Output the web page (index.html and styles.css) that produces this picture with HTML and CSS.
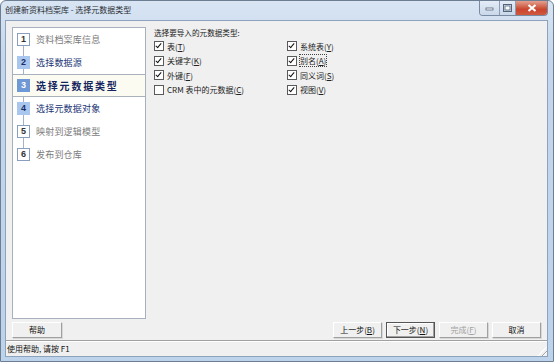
FILE: index.html
```html
<html lang="zh-CN">
<head>
    <meta charset="UTF-8">
    <title>创建新资料档案库 - 选择元数据类型</title>
    <link rel="stylesheet" href="styles.css">
</head>
<body>
    <div class="window">
        <div class="titlebar">
            <div class="title">创建新资料档案库 - 选择元数据类型</div>
            <div class="caption">
                <div class="cap_btn cap_min">
                    <svg width="9" height="5" viewBox="0 0 9 5"><rect x="1" y="2" width="7" height="2" fill="#fff" stroke="#55657a" stroke-width="0.8"/></svg>
                </div>
                <div class="cap_btn cap_max">
                    <svg width="9" height="8" viewBox="0 0 9 8"><rect x="0.5" y="0.5" width="8" height="7" fill="none" stroke="#55657a"/><rect x="2" y="2" width="5" height="4" fill="#fff" stroke="#55657a" stroke-width="0.8"/></svg>
                </div>
                <div class="cap_btn cap_close">
                    <svg width="10" height="8" viewBox="0 0 10 8"><path d="M1.5 1 L8.5 7 M8.5 1 L1.5 7" stroke="#fff" stroke-width="2.2"/></svg>
                </div>
            </div>
        </div>

        <div class="client">
            <div class="main">
                <ol class="steps">
                    <li class="step done"><span class="num">1</span><span class="label">资料档案库信息</span></li>
                    <li class="step reach"><span class="num">2</span><span class="label">选择数据源</span></li>
                    <li class="step current"><span class="num">3</span><span class="label">选择元数据类型</span></li>
                    <li class="step reach"><span class="num">4</span><span class="label">选择元数据对象</span></li>
                    <li class="step done"><span class="num">5</span><span class="label">映射到逻辑模型</span></li>
                    <li class="step done"><span class="num">6</span><span class="label">发布到仓库</span></li>
                </ol>

                <div class="content">
                    <div class="heading">选择要导入的元数据类型:</div>
                    <div class="options">
                        <div class="opt"><span class="cb on"></span><span>表(<u>T</u>)</span></div>
                        <div class="opt"><span class="cb on"></span><span>系统表(<u>Y</u>)</span></div>
                        <div class="opt"><span class="cb on"></span><span>关键字(<u>K</u>)</span></div>
                        <div class="opt"><span class="cb on"></span><span class="focus">别名(<u>A</u>)</span></div>
                        <div class="opt"><span class="cb on"></span><span>外键(<u>F</u>)</span></div>
                        <div class="opt"><span class="cb on"></span><span>同义词(<u>S</u>)</span></div>
                        <div class="opt"><span class="cb"></span><span>CRM 表中的元数据(<u>C</u>)</span></div>
                        <div class="opt"><span class="cb on"></span><span>视图(<u>V</u>)</span></div>
                    </div>
                </div>
            </div>

            <div class="btn_row">
                <div class="btn">帮助</div>
                <div class="btn_group">
                    <div class="btn">上一步(<u>B</u>)</div>
                    <div class="btn default">下一步(<u>N</u>)</div>
                    <div class="btn disabled">完成(<u>F</u>)</div>
                    <div class="btn">取消</div>
                </div>
            </div>

            <div class="status">
                <span>使用帮助, 请按 F1</span>
                <span class="grip"></span>
            </div>
        </div>
    </div>
</body>
</html>
```

FILE: styles.css
```css
body{
    margin: 0;
    font-family: "Noto Sans CJK SC", "Liberation Sans", sans-serif;
    font-size: 8px;
    color: #1a1a1a;
}
.window{
    width: 554px;
    height: 362px;
    box-sizing: border-box;
    border: 1px solid #6d7e93;
    border-radius: 6px 6px 0 0;
    background: linear-gradient(#d9e5f3, #c3d6ed 60px, #bdd2eb);
    display: flex;
    flex-direction: column;
    overflow: hidden;
}
.titlebar{
    height: 19px;
    display: flex;
    align-items: flex-start;
}
.title{
    padding: 3px 0 0 4px;
    line-height: 12px;
    color: #2a2e33;
}
.caption{
    margin-left: auto;
    margin-right: 5px;
    display: flex;
    height: 14px;
    border: 1px solid #7a8aa0;
    border-top: none;
    border-radius: 0 0 4px 4px;
    overflow: hidden;
}
.cap_btn{
    height: 14px;
    display: flex;
    align-items: center;
    justify-content: center;
    background: linear-gradient(#e4ecf6, #c9d8eb);
}
.cap_min{
    width: 19px;
    border-right: 1px solid #8c9db3;
}
.cap_max{
    width: 15px;
    border-right: 1px solid #8c9db3;
}
.cap_close{
    width: 31px;
    background: linear-gradient(#e3a08f, #c9462d 60%, #d0593f);
}

.client{
    flex: 1;
    margin: 0 5px 4px 4px;
    border: 1px solid #8da2bb;
    background: #f0f0f0;
    display: flex;
    flex-direction: column;
}
.main{
    flex: 1;
    display: flex;
    padding: 6px 6px 0 6px;
}
.steps{
    margin: 0;
    padding: 0;
    list-style: none;
    width: 134px;
    height: 292px;
    box-sizing: border-box;
    border: 1px solid #a7b0bc;
    background: #fff;
}
.step{
    height: 23px;
    box-sizing: border-box;
    display: flex;
    align-items: center;
    padding-left: 4px;
    background: linear-gradient(#a3b2c9, #a3b2c9) no-repeat 10px 0 / 1px 100%;
}
.step:first-child{
    background-position: 10px 12px;
}
.step:last-child{
    background-size: 1px 11px;
}
.num{
    width: 13px;
    height: 13px;
    box-sizing: border-box;
    border: 1px solid #8a9ec0;
    background: #fff;
    font-family: "Liberation Sans", sans-serif;
    font-weight: bold;
    font-size: 9px;
    line-height: 11px;
    text-align: center;
    color: #333;
}
.label{
    margin-left: 6px;
    font-size: 9px;
    letter-spacing: 0.2px;
}
.done .label{
    color: #7c7c7c;
}
.reach .num{
    background: #a9c6ee;
    border-color: #a9c6ee;
    color: #1b2c66;
}
.reach .label{
    color: #213474;
}
.current{
    background: #fbfbf1;
    border-top: 1px solid #a9b1bc;
    border-bottom: 1px solid #a9b1bc;
}
.current .num{
    background: #6e98d6;
    border-color: #6e98d6;
    color: #fff;
}
.current .label{
    color: #14245e;
    font-weight: bold;
    font-size: 10px;
    letter-spacing: 1.8px;
}

.content{
    flex: 1;
    padding-left: 8px;
}
.heading{
    line-height: 12px;
    font-size: 7.6px;
    color: #222;
}
.options{
    display: grid;
    grid-template-columns: 133px 1fr;
    grid-auto-rows: 14.5px;
}
.opt{
    display: flex;
    align-items: center;
    color: #222;
}
.opt u{
    text-decoration: underline;
}
.cb{
    width: 8px;
    height: 8px;
    border: 1px solid #5a5a5a;
    background: #fff;
    margin-right: 3px;
    position: relative;
}
.cb.on::after{
    content: "";
    position: absolute;
    left: 2px;
    top: 0px;
    width: 2px;
    height: 5px;
    border: solid #111;
    border-width: 0 1.5px 1.5px 0;
    transform: rotate(40deg);
}
.focus{
    outline: 1px dotted #444;
    outline-offset: 0;
    line-height: 11px;
}

.btn_row{
    display: flex;
    padding: 3px 6px 0 6px;
}
.btn_group{
    margin-left: auto;
    display: flex;
    gap: 4px;
}
.btn{
    width: 49px;
    height: 16px;
    box-sizing: border-box;
    border: 1px solid;
    border-color: #fff #a0a0a0 #a0a0a0 #fff;
    background: #f0f0f0;
    text-align: center;
    line-height: 14px;
    color: #111;
    box-shadow: 1px 1px 0 #d8d8d8;
}
.btn_row > .btn{
    width: 50px;
}
.btn.default{
    border: 1px solid #555;
    box-shadow: inset -1px -1px 0 #a0a0a0, inset 1px 1px 0 #fff;
}
.btn.disabled{
    color: #a0a0a0;
}
.status{
    flex: 1;
    margin-top: 2px;
    border-top: 1px solid #a0a0a0;
    box-shadow: inset 0 1px 0 #fff;
    display: flex;
    align-items: center;
    padding-left: 1px;
    color: #111;
}
.grip{
    margin-left: auto;
    width: 10px;
    height: 10px;
    align-self: flex-end;
    background: repeating-linear-gradient(135deg, transparent 0 2px, #a0a0a0 2px 3px, #fff 3px 4px);
    clip-path: polygon(100% 0, 100% 100%, 0 100%);
}
```
